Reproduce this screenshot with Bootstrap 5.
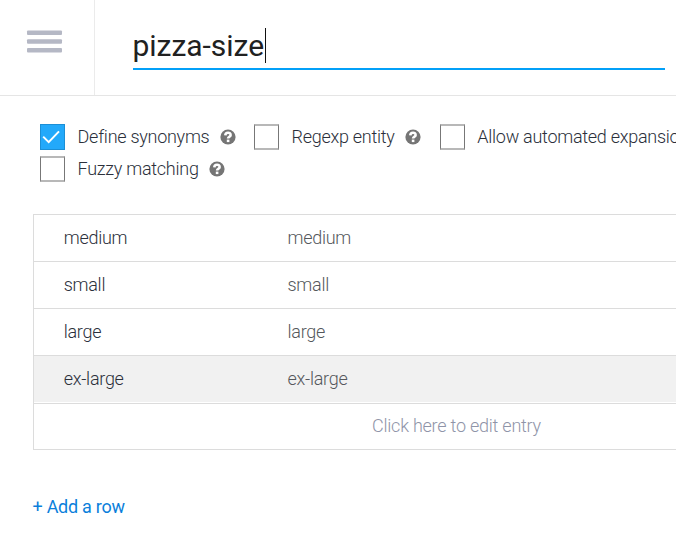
<!DOCTYPE html>
<html lang="en">
<head>
<meta charset="utf-8">
<meta name="viewport" content="width=device-width, initial-scale=1">
<title>Entity: pizza-size</title>
<link href="https://cdn.jsdelivr.net/npm/bootstrap@5.3.0/dist/css/bootstrap.min.css" rel="stylesheet">
<style>
body{font-family:Roboto,sans-serif;font-weight:300;font-size:18px;letter-spacing:-.27px;line-height:32px;color:#2b303b;background:#fff;width:676px;height:548px}
.topbar{height:96px;border-bottom:1px solid #e5e5e5}
.menu-cell{width:95px;border-right:1px solid #ebebeb;padding:30px 0 0 26px}
.title-field{margin:28px 11px 0 38px;height:42px;border-bottom:2px solid #03a0f8}
.title-text{font-size:30px;line-height:35px;font-weight:400;letter-spacing:-.03px;margin-left:-.5px;color:#212121}
.caret{width:1px;height:35px;margin-left:.6px;background:#111}
.options{padding:28px 0 0 40px}
.opt{height:25px;margin-bottom:7px}
.opt+.opt{margin-left:18.3px}
.opt+.opt+.opt{margin-left:18.9px}
.box{width:25px;height:26px;border:solid #b8b8b8;border-width:2px 1px;border-left-color:#777;border-right-color:#777;margin-right:12.6px}
.box.checked{background:#23a9fa;border:1px solid #1c8fd6}
.help{margin-left:10.2px}
.entries{margin:33px 0 0 33px;border:1px solid #dcdcdc;border-right:0;height:236px}
.entry{height:47px;border-bottom:1px solid #dcdcdc;line-height:46px}
.entry.current{height:48px;background:linear-gradient(#f1f1f1 46px,#fff 46px)}
.key{width:253.5px;padding-left:29.7px}
.syn{color:#55585c}
.hint{padding-left:338px;line-height:44px;letter-spacing:-.23px;color:#8f94a8}
.add-row{margin:41px 0 0 32.5px;font-weight:400;color:#0b7fdb}
</style>
</head>
<body class="overflow-hidden">
<header class="topbar d-flex">
  <div class="menu-cell flex-shrink-0">
    <svg class="d-block" width="37" height="24" viewBox="0 0 37 24" fill="#b5b8c5"><rect x="1" y=".5" width="35" height="4.5" rx="1"/><rect x="1" y="9.2" width="35" height="4.5" rx="1"/><rect x="1" y="18" width="35" height="4.5" rx="1"/></svg>
  </div>
  <div class="title-field flex-grow-1 d-flex">
    <span class="title-text">pizza-size</span><span class="caret"></span>
  </div>
</header>
<svg class="d-none"><symbol id="help" viewBox="0 0 16 16"><circle cx="8" cy="8" r="7.6" fill="#757575"/><path d="M5.3 6.4C5.4 2.9 10.8 3 10.6 6.1C10.5 7.8 8.1 7.8 8.1 9.6" fill="none" stroke="#fff" stroke-width="2.6"/><path d="M6.8 10.6h2.6v2.5H6.8z" fill="#fff"/></symbol></svg>
<section class="options text-nowrap">
  <div class="d-flex">
    <div class="opt d-flex align-items-center flex-shrink-0"><span class="box checked"><svg class="d-block" width="23" height="24" viewBox="0 0 23 24"><path d="M2.2 11.6L7.7 17.1L18 6.4" fill="none" stroke="#fff" stroke-width="2"/></svg></span><span>Define synonyms</span><svg class="help" width="16" height="16"><use href="#help"/></svg></div>
    <div class="opt d-flex align-items-center flex-shrink-0"><span class="box"></span><span>Regexp entity</span><svg class="help" width="16" height="16"><use href="#help"/></svg></div>
    <div class="opt d-flex align-items-center flex-shrink-0"><span class="box"></span><span>Allow automated expansion</span></div>
  </div>
  <div class="opt d-flex align-items-center"><span class="box"></span><span>Fuzzy matching</span><svg class="help" width="16" height="16"><use href="#help"/></svg></div>
</section>
<section class="entries">
  <div class="entry d-flex"><span class="key">medium</span><span class="syn">medium</span></div>
  <div class="entry d-flex"><span class="key">small</span><span class="syn">small</span></div>
  <div class="entry d-flex"><span class="key">large</span><span class="syn">large</span></div>
  <div class="entry current d-flex"><span class="key">ex-large</span><span class="syn">ex-large</span></div>
  <div class="hint">Click here to edit entry</div>
</section>
<div class="add-row">+ Add a row</div>
<script src="https://cdn.jsdelivr.net/npm/bootstrap@5.3.0/dist/js/bootstrap.bundle.min.js"></script>
</body>
</html>
